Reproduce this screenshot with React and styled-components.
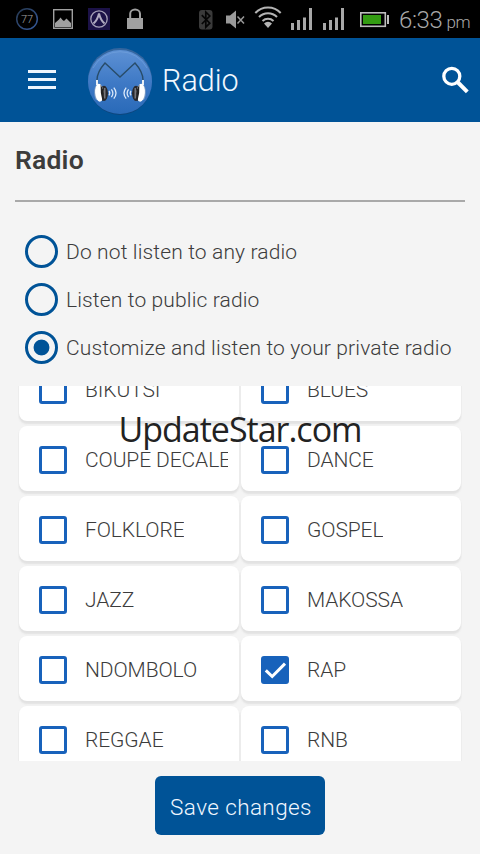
import React, { useState } from 'react';
import styled, { createGlobalStyle } from 'styled-components';

const genres = [
    'BIKUTSI', 'BLUES',
    'COUPE DECALE', 'DANCE',
    'FOLKLORE', 'GOSPEL',
    'JAZZ', 'MAKOSSA',
    'NDOMBOLO', 'RAP',
    'REGGAE', 'RNB',
];

const modes = [
    'Do not listen to any radio',
    'Listen to public radio',
    'Customize and listen to your private radio',
];

export default function App() {
    const [mode, setMode] = useState(2);
    const [picked, setPicked] = useState(['RAP']);

    const toggle = (genre) => setPicked(
        picked.includes(genre) ? picked.filter((g) => g !== genre) : [...picked, genre]
    );

    return (
        <Screen>
            <GlobalStyle />
            <StatusBar>
                <StatusIcons />
                <Clock>6:33<small>pm</small></Clock>
            </StatusBar>
            <Toolbar>
                <MenuButton aria-label="Menu"><span /><span /><span /></MenuButton>
                <Logo />
                <AppTitle>Radio</AppTitle>
                <SearchIcon />
            </Toolbar>
            <Heading>Radio</Heading>
            <Modes>
                {modes.map((label, i) => (
                    <Mode key={label} onClick={() => setMode(i)}>
                        <RadioMark $on={mode === i} />
                        {label}
                    </Mode>
                ))}
            </Modes>
            <GenreList>
                <Grid>
                    {genres.map((genre) => (
                        <Card key={genre} onClick={() => toggle(genre)}>
                            <Checkbox $on={picked.includes(genre)}>
                                {picked.includes(genre) && (
                                    <svg width="27" height="27" viewBox="0 0 27 27">
                                        <path d="M3.8 13.3 L10.2 19.5 L23 6.6" fill="none" stroke="#fff" strokeWidth="3" />
                                    </svg>
                                )}
                            </Checkbox>
                            <Genre>{genre}</Genre>
                        </Card>
                    ))}
                </Grid>
            </GenreList>
            <Watermark>UpdateStar.com</Watermark>
            <SaveButton>Save changes</SaveButton>
        </Screen>
    );
}

function StatusIcons() {
    return (
        <svg width="392" height="38" viewBox="0 0 392 38">
            <defs>
                <linearGradient id="ring" x1="0" y1="0" x2="1" y2="1">
                    <stop offset="0" stopColor="#26384f" />
                    <stop offset="1" stopColor="#365a9c" />
                </linearGradient>
            </defs>
            <circle cx="27" cy="19" r="10.3" fill="none" stroke="url(#ring)" strokeWidth="1.5" />
            <text x="27" y="23" textAnchor="middle" fontFamily="Roboto, sans-serif" fontSize="11" fill="#a0a0a0">77</text>

            <rect x="53.7" y="9.7" width="18.6" height="18.6" fill="none" stroke="#a0a0a0" strokeWidth="1.4" />
            <path d="M55 27v-4l4-3.5 1.5-2 2 2.5 1.5 1 2.5-2.5 4.5 4.5v4z" fill="#a0a0a0" />

            <rect x="88" y="8" width="22" height="22" fill="#1c1248" />
            <circle cx="99" cy="19" r="8.2" fill="none" stroke="#a6a0b8" strokeWidth="1.3" />
            <path d="M93.5 23.5Q97.5 20 99 13.5Q100.5 20 104.5 23.5" fill="none" stroke="#b0aac0" strokeWidth="2" />

            <rect x="127" y="18" width="16" height="11" fill="#a0a0a0" />
            <path d="M130.2 18.5v-4.7a4.9 4.3 0 0 1 9.8 0v4.7" fill="none" stroke="#a0a0a0" strokeWidth="2" />

            <rect x="199" y="10" width="13.5" height="19.5" rx="3" fill="#3a3a3a" />
            <path d="M201.8 15.2l8 8-4 4V12l4 4-8 8" fill="none" stroke="#050505" strokeWidth="1.7" />

            <path d="M226 15.5h4l6-5v18l-6-5h-4z" fill="#999" />
            <path d="M237.5 16.5l6.5 7M244 16.5l-6.5 7" stroke="#999" strokeWidth="1.5" />

            <g fill="none" stroke="#b4b4b4" strokeWidth="2">
                <path d="M255.3 13a17.5 17.5 0 0 1 25.4 0" />
                <path d="M259 17a12.5 12.5 0 0 1 18 0" />
                <path d="M262.5 21a8 8 0 0 1 11 0" />
            </g>
            <path d="M268 28l-4-4.5a5.5 5.5 0 0 1 8 0z" fill="#b4b4b4" />

            <g fill="#a8a8a8">
                <path d="M291 23h3v7h-3zM297 20h3v10h-3zM303 17.5h3v12.5h-3zM309 8h3v22h-3z" />
                <path d="M323 23h3v7h-3zM329 20h3v10h-3zM335 17.5h3v12.5h-3zM341 8h3v22h-3z" />
            </g>

            <rect x="360.8" y="12.8" width="24.5" height="13.5" fill="none" stroke="#bdbdbd" strokeWidth="1.6" />
            <rect x="363" y="15" width="18" height="9" fill="#339c12" />
            <rect x="387" y="15" width="2" height="9" fill="#bdbdbd" />
        </svg>
    );
}

function Logo() {
    return (
        <LogoSvg width="66" height="70" viewBox="0 0 66 70">
            <defs>
                <linearGradient id="disc" x1="0" y1="0" x2="0" y2="1">
                    <stop offset="0" stopColor="#5e91d4" />
                    <stop offset=".5" stopColor="#3f7ac6" />
                    <stop offset="1" stopColor="#296ab8" />
                </linearGradient>
            </defs>
            <circle cx="33" cy="34" r="32" fill="#34669f" />
            <circle cx="33" cy="37.5" r="31.5" fill="#143f70" opacity=".65" />
            <circle cx="33" cy="36" r="32" fill="url(#disc)" />
            <path d="M6 22a30.5 30.5 0 0 1 54 0" fill="none" stroke="#74a3dd" strokeWidth="1" opacity=".6" />
            <path d="M10 38V34Q10 26 18 17L33 31L48 17Q56 26 56 34V38" fill="none" stroke="#284c69" strokeWidth="1.4" />
            <Earcup />
            <g transform="translate(66 0) scale(-1 1)"><Earcup /></g>
        </LogoSvg>
    );
}

function Earcup() {
    return (
        <g>
            <path d="M10 34v5" stroke="#fff" strokeWidth="1.8" />
            <ellipse cx="9.8" cy="46.5" rx="2.6" ry="7.5" fill="#7d9cc4" />
            <ellipse cx="17" cy="47.3" rx="4" ry="7.6" fill="#29292c" />
            <ellipse cx="12.3" cy="46.8" rx="4.2" ry="9" fill="#fff" transform="rotate(-4 12.3 46.8)" />
            <path d="M13.6 38.5q5.500 8.500 2 17q-2.500-8.500-2-17z" fill="#222" />
            <path d="M17.8 42v10.500" stroke="#8a8a8e" strokeWidth="1.2" />
            <g fill="none" stroke="#dbe9fa" strokeWidth="1.3">
                <path d="M22 45q1.6 2 0 4.4" />
                <path d="M24.4 43.3q3 3.8 0 7.8" />
                <path d="M26.8 41.7q4.4 5.2 0 11" />
            </g>
        </g>
    );
}

function SearchIcon() {
    return (
        <svg width="28" height="28" viewBox="0 0 28 28">
            <circle cx="10.8" cy="10.3" r="8" fill="none" stroke="#fff" strokeWidth="3.3" />
            <path d="M16.5 16L26.3 25.8" stroke="#fff" strokeWidth="4" />
        </svg>
    );
}

const GlobalStyle = createGlobalStyle`
    * {
        box-sizing: border-box;
    }

    body {
        margin: 0;
        background: #f4f4f4;
        font-family: Roboto, "Liberation Sans", sans-serif;
        font-weight: 300;
        color: #3c3c3c;
    }
`;

const Screen = styled.div`
    position: relative;
    width: 480px;
    height: 854px;
    display: flex;
    flex-direction: column;
    overflow: hidden;
    background: #f4f4f4;
`;

const StatusBar = styled.div`
    height: 38px;
    flex: none;
    display: flex;
    background: #000;
`;

const Clock = styled.div`
    padding-left: 7px;
    line-height: 40px;
    font-size: 24px;
    letter-spacing: -0.4px;
    color: #a9a9a9;
    white-space: nowrap;

    small{
        margin-left: 4px;
        font-size: 17px;
    }
`;

const Toolbar = styled.header`
    height: 84px;
    flex: none;
    display: flex;
    align-items: center;
    padding: 0 11px 0 28px;
    background: #005397;

    > svg:last-child{
        margin-left: auto;
    }
`;

const MenuButton = styled.button`
    width: 28px;
    margin-top: -1px;
    padding: 0;
    border: 0;
    background: none;
    display: flex;
    flex-direction: column;
    gap: 5px;

    span{
        height: 3px;
        background: #edf5fd;
    }
`;

const LogoSvg = styled.svg`
    margin: 2px 0 0 31px;
`;

const AppTitle = styled.div`
    margin-left: 9px;
    padding-top: 1px;
    font-size: 30.5px;
    color: #f1f8ff;
`;

const Heading = styled.h1`
    height: 80px;
    flex: none;
    margin: 0 15px;
    padding-top: 18px;
    border-bottom: 2px solid #a9a9a9;
    font-size: 26.5px;
    letter-spacing: 0.2px;
    line-height: 40px;
    font-weight: 600;
`;

const Modes = styled.div`
    flex: none;
    padding: 26px 0 14px 25px;
`;

const Mode = styled.div`
    height: 48px;
    display: flex;
    align-items: center;
    gap: 8px;
    font-size: 21px;
    letter-spacing: 0.14px;
    white-space: nowrap;
`;

const RadioMark = styled.span`
    width: 33px;
    height: 33px;
    margin-top: -1px;
    border: 3px solid #005397;
    border-radius: 50%;
    background: ${({ $on }) => ($on ? 'radial-gradient(circle, #005397 7.5px, transparent 8.3px)' : 'none')};
`;

const GenreList = styled.div`
    height: 375px;
    flex: none;
    width: 444px;
    margin-left: 18px;
    overflow: hidden;
    background: #f4f4f4;
`;

// the list is scrolled part way into its first row
const Grid = styled.div`
    display: grid;
    grid-template-columns: 220px 220px;
    grid-auto-rows: 65px;
    gap: 5px 2px;
    margin: -30px 0 0 1px;
`;

const Card = styled.div`
    display: flex;
    align-items: center;
    padding: 3px 11px 0 20px;
    border-radius: 8px;
    background: #fff;
    box-shadow: 0 3px 2px #e2e2e2, 0 1px 2px #e8e8e8;
`;

const Checkbox = styled.span`
    width: 28px;
    height: 28px;
    flex: none;
    display: flex;
    align-items: center;
    justify-content: center;
    border: 3px solid #1862bb;
    border-radius: 3px;
    background: ${({ $on }) => ($on ? '#1862bb' : '#fff')};

    svg{
        flex: none;
    }
`;

const Genre = styled.span`
    margin-left: 18px;
    overflow: hidden;
    font-size: 21px;
    letter-spacing: -0.1px;
    white-space: nowrap;
`;

const Watermark = styled.div`
    position: absolute;
    top: 405px;
    left: 0;
    width: 480px;
    text-align: center;
    font-family: "Open Sans", "Noto Sans", sans-serif;
    font-size: 34px;
    letter-spacing: -1px;
    line-height: 48px;
    font-weight: 400;
    color: #222;
    pointer-events: none;
`;

const SaveButton = styled.button`
    width: 170px;
    height: 59px;
    flex: none;
    align-self: center;
    margin-top: 15px;
    padding: 2px 0 0 2px;
    border: 0;
    border-radius: 6px;
    background: #005397;
    font-family: inherit;
    font-size: 22.5px;
    letter-spacing: 0.4px;
    font-weight: 300;
    color: #f0f7ff;
    white-space: nowrap;
`;
